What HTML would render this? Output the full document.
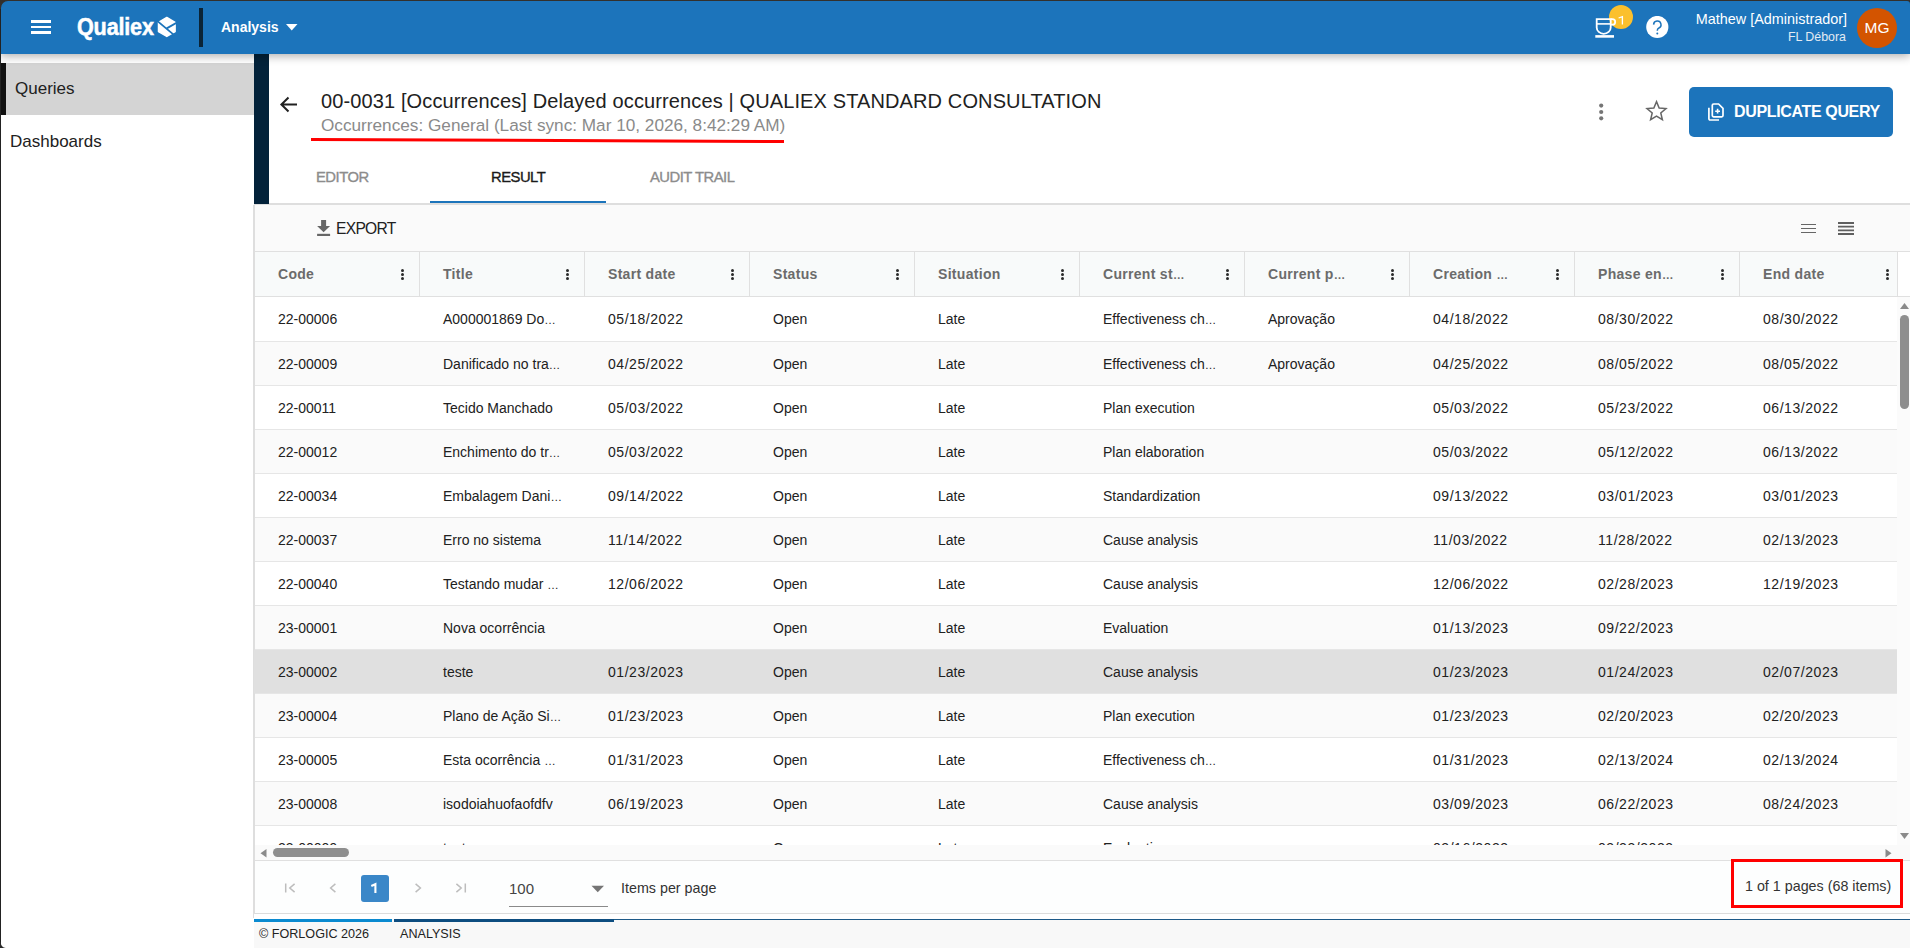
<!DOCTYPE html>
<html><head><meta charset="utf-8"><title>Qualiex Analysis</title>
<style>
*{box-sizing:border-box;margin:0;padding:0}
html,body{width:1910px;height:948px;overflow:hidden;background:#fff;font-family:"Liberation Sans",sans-serif;color:#212121}
.a{position:absolute}
/* frame */
#fr-t{left:0;top:0;width:1910px;height:1px;background:#33302c;z-index:50}
#fr-l{left:0;top:0;width:1px;height:948px;background:#222;z-index:50}
/* header */
#hdr{left:0;top:0;width:1910px;height:54px;background:#1c74bb;z-index:10;box-shadow:0 2px 9px rgba(0,0,0,.33)}
.hb{background:#fff;left:31px;width:20px;height:2px}
#logo{left:77px;top:13px;font-weight:bold;font-size:24px;color:#fff;transform-origin:0 0;transform:scaleX(.9);letter-spacing:-0.2px;-webkit-text-stroke:0.5px #fff;line-height:28px}
#hdiv{left:199px;top:8px;width:4px;height:39px;background:#0b2436}
#anal{left:221px;top:19px;font-weight:bold;font-size:14px;color:#fff;line-height:17px}
#user{right:63px;top:11px;font-size:14.4px;color:#fff;text-align:right;line-height:16px;white-space:nowrap}
#org{right:64px;top:30px;font-size:12.4px;color:#e3ebf3;text-align:right;line-height:14px}
#avatar{left:1857px;top:8px;width:40px;height:40px;border-radius:50%;background:#d35400;color:#fff;font-size:15.5px;padding-bottom:2px;text-align:center;line-height:40px}
#badge{left:1609px;top:5px;width:24px;height:24px;border-radius:50%;background:#fbc02d}
/* sidebar */
#side{left:1px;top:54px;width:253px;height:894px;background:#fff}
#q{left:1px;top:63px;width:253px;height:52px;background:#d4d4d4}
#qbar{left:1px;top:63px;width:5px;height:52px;background:#111}
.snav{font-size:17px;color:#212121;line-height:20px}
/* page head */
#dbar{left:254px;top:54px;width:15px;height:150px;z-index:2;background:#03223a}
#back{left:279px;top:95px}
#title{left:321px;top:90px;font-size:20px;color:#212121;line-height:23px;white-space:nowrap;letter-spacing:.12px}
#sub{left:321px;top:115px;font-size:17.2px;color:#8a8a8a;line-height:20px;white-space:nowrap}
#redline{left:310px;top:136px}
#btn{left:1689px;top:87px;width:204px;height:50px;border-radius:5px;background:#1c74bb}
#btntxt{left:1734px;top:103px;font-weight:bold;font-size:16px;letter-spacing:-0.35px;color:#fff;line-height:17px;white-space:nowrap}
.tab{top:169px;font-size:14.8px;font-weight:normal;-webkit-text-stroke:.35px currentColor;letter-spacing:-0.5px;color:#8c8c8c;line-height:17px;white-space:nowrap}
#tabline{left:430px;top:201px;width:176px;height:2px;background:#1c74bb}
#gline{left:254px;top:203px;width:1656px;height:2px;background:#dedede}
/* content */
#cont{left:253px;top:205px;width:1657px;height:713px;background:#fafafa;border-left:2px solid #dedede}
#export{left:336px;top:220px;font-size:15.6px;letter-spacing:-0.7px;color:#212121;line-height:17px}
/* table */
#thead{left:255px;top:251px;width:1655px;height:46px;border-top:1px solid #e0e0e0;border-bottom:1px solid #e0e0e0;background:#f8fafa;overflow:hidden}
#thead .fill{position:absolute;left:1642px;top:0;width:13px;height:44px;background:#fff;border-left:1px solid #e0e0e0}
.th{position:absolute;top:0;width:165px;height:44px;border-right:1px solid #e0e0e0}
.th span{position:absolute;left:23px;top:14px;font-weight:bold;font-size:14px;letter-spacing:.3px;color:#6b6b6b;line-height:16px;white-space:nowrap}
.el{font-style:normal;font-size:11.5px;letter-spacing:0}
.kb{position:absolute;left:146px;top:17px;width:3px;height:11px}
.kb b{display:block;width:3px;height:3px;border-radius:50%;background:#2a2a2a;margin-bottom:1px}
#tbody{left:254px;top:297px;width:1643px;height:548px;overflow:hidden}
.tr{position:absolute;left:1px;width:1642px;height:44px;border-bottom:1px solid #e6e6e6;background:#fff}
.tr.alt{background:#fafafa}
.tr.hov{background:#e0e0e0}
.tr.hov::before{content:'';position:absolute;left:-1px;top:0;width:1px;height:43px;background:#e0e0e0}
.td.dt{letter-spacing:.55px}
.td{position:absolute;top:0;left:0;width:165px;height:43px;padding-left:23px;font-size:14px;line-height:45px;color:#212121;white-space:nowrap}
#vs{left:1897px;top:297px;width:13px;height:548px;background:#fbfbfb}
#hs{left:255px;top:845px;width:1642px;height:15px;background:#fafafa}
#pager{left:255px;top:860px;width:1655px;height:54px;background:#fdfefe;border-top:1px solid #e0e0e0;border-bottom:1px solid #dcdcdc}
#pg1{left:361px;top:875px;width:28px;height:27px;border-radius:3px;background:#3a87c8}
#sel100{left:509px;top:880px;font-size:15px;color:#444;line-height:17px}
#selline{left:509px;top:906px;width:99px;height:1px;background:#8a8a8a}
#ipp{left:621px;top:880px;font-size:14.3px;color:#333;line-height:17px}
#pinfo{left:1745px;top:878px;font-size:14.3px;color:#333;line-height:17px;white-space:nowrap}
#redbox{left:1731px;top:859px;width:172px;height:49px;border:3px solid #ff0000}
#gap{left:254px;top:914px;width:1656px;height:5px;background:#fff}
#foot{left:254px;top:919px;width:1656px;height:29px;background:#f8f8f8}
#fl1{left:254px;top:919px;width:138px;height:3px;background:#0a8ad0}
#fl2{left:394px;top:919px;width:220px;height:3px;background:#0d4d80}
#fl3{left:614px;top:919px;width:1296px;height:1px;background:#1d5a88}
.ft{top:927px;font-size:12.6px;color:#222;line-height:14px;white-space:nowrap}
</style></head><body>
<div id="fr-t" class="a"></div><div id="fr-l" class="a"></div>
<svg class="a" style="left:0;top:0;z-index:51" width="9" height="9"><path d="M0 0H9V1H8A7 7 0 0 0 1 8V9H0Z" fill="#33302c"/></svg>
<svg class="a" style="left:1904px;top:0;z-index:51" width="6" height="6"><path d="M0 0H6V6H6V4A3 3 0 0 0 3 1H0Z" fill="#33302c"/></svg>
<svg class="a" style="left:0;top:942px;z-index:51" width="7" height="6"><path d="M0 0H1A5 5 0 0 0 6 6H0Z" fill="#2a2a2a"/></svg>

<!-- header -->
<div id="hdr" class="a">
  <div class="a hb" style="top:20px;height:3px"></div>
  <div class="a hb" style="top:26px"></div>
  <div class="a hb" style="top:31px;height:3px"></div>
  <div id="logo" class="a">Qualiex</div>
  <svg class="a" style="left:156px;top:15px" width="22" height="24" viewBox="156 15 22 24">
    <path d="M166.8 17.5L175.1 22.3V31.6L166.8 36.4L158.5 31.6V22.3Z" fill="#fff" stroke="#fff" stroke-width="1.5" stroke-linejoin="round"/>
    <path d="M156.3 20.2L174.2 35.1M166.3 28.6L177.8 22" stroke="#1c74bb" stroke-width="1.8"/>
  </svg>
  <div id="hdiv" class="a"></div>
  <div id="anal" class="a">Analysis</div>
  <svg class="a" style="left:286px;top:24px" width="12" height="7"><path d="M0 0H11.5L5.75 6.5Z" fill="#fff"/></svg>
  <div id="badge" class="a"></div>
  <svg class="a" style="left:1609px;top:5px" width="24" height="24" viewBox="1609 5 24 24"><path d="M1622.4 24.6V16.6L1618.6 18" fill="none" stroke="#fff" stroke-width="1.3"/></svg>
  <!-- cup icon -->
  <svg class="a" style="left:1592px;top:15px" width="26" height="26" viewBox="1592 15 26 26">
    <path d="M1596.7 19.1H1610.7V27.4A7 6.4 0 0 1 1596.7 27.4Z" fill="none" stroke="#fff" stroke-width="1.8"/>
    <path d="M1596.7 23.9H1610.7" stroke="#fff" stroke-width="1.6"/>
    <path d="M1610.7 19.1H1612.4A2.8 2.8 0 0 1 1612.4 24.7H1610.7" fill="none" stroke="#fff" stroke-width="1.8"/>
    <path d="M1595.3 36.4H1614" stroke="#fff" stroke-width="2.6"/>
  </svg>
  <svg class="a" style="left:1646px;top:16px" width="23" height="23" viewBox="0 0 23 23">
    <circle cx="11.3" cy="11" r="11.1" fill="#fff"/>
    <path d="M7.6 8.6A3.7 3.7 0 1 1 12.6 12.2C11.6 12.8 11.3 13.5 11.3 14.8" fill="none" stroke="#1c74bb" stroke-width="1.5"/>
    <circle cx="11.3" cy="17.6" r="1" fill="#1c74bb"/>
  </svg>
  <div id="user" class="a">Mathew [Administrador]</div>
  <div id="org" class="a">FL Débora</div>
  <div id="avatar" class="a">MG</div>
</div>

<!-- sidebar -->
<div id="side" class="a"></div>
<div id="q" class="a"></div><div id="qbar" class="a"></div>
<div class="a snav" style="left:15px;top:79px">Queries</div>
<div class="a snav" style="left:10px;top:132px">Dashboards</div>

<!-- page head -->
<div id="dbar" class="a"></div>
<svg id="back" class="a" width="20" height="19" viewBox="0 0 20 19"><path d="M18 9.5H3M9.5 2.5L2.4 9.5L9.5 16.5" fill="none" stroke="#212121" stroke-width="2"/></svg>
<div id="title" class="a">00-0031 [Occurrences] Delayed occurrences | QUALIEX STANDARD CONSULTATION</div>
<div id="sub" class="a">Occurrences: General (Last sync: Mar 10, 2026, 8:42:29 AM)</div>
<svg id="redline" class="a" width="480" height="9"><path d="M1 3.5L474 5.5" stroke="#ff0000" stroke-width="3"/></svg>
<!-- kebab -->
<svg class="a" style="left:1598px;top:102px" width="7" height="20"><circle cx="3.2" cy="3.6" r="2.1" fill="#757575"/><circle cx="3.2" cy="10" r="2.1" fill="#757575"/><circle cx="3.2" cy="16.3" r="2.1" fill="#757575"/></svg>
<!-- star -->
<svg class="a" style="left:1644px;top:99px" width="25" height="24" viewBox="0 0 25 24">
<path d="M12.50 2.60L15.15 8.96L22.01 9.51L16.78 13.99L18.38 20.69L12.50 17.10L6.62 20.69L8.22 13.99L2.99 9.51L9.85 8.96Z" fill="none" stroke="#666" stroke-width="1.5" stroke-linejoin="miter"/>
</svg>
<div id="btn" class="a"></div>
<svg class="a" style="left:1706px;top:101px" width="20" height="22" viewBox="0 0 20 22">
<path d="M7.6 3H12.6L17 7.4V14.5A1.3 1.3 0 0 1 15.7 15.8H7.6A1.3 1.3 0 0 1 6.3 14.5V4.3A1.3 1.3 0 0 1 7.6 3Z" fill="none" stroke="#fff" stroke-width="1.7"/>
<path d="M2.9 6.8V17.8A1.2 1.2 0 0 0 4.1 19H13" fill="none" stroke="#fff" stroke-width="1.7"/>
<path d="M11.6 7.8V12.6M9.2 10.2H14" stroke="#fff" stroke-width="1.6"/>
</svg>
<div id="btntxt" class="a">DUPLICATE QUERY</div>
<div class="a tab" style="left:316px">EDITOR</div>
<div class="a tab" style="left:491px;color:#1a1a1a">RESULT</div>
<div class="a tab" style="left:650px">AUDIT TRAIL</div>
<div id="tabline" class="a"></div>
<div id="gline" class="a"></div>

<!-- content -->
<div id="cont" class="a"></div>
<svg class="a" style="left:315px;top:218px" width="17" height="19" viewBox="0 0 17 19"><path d="M6.1 1.9H11.1V8.1H15.1L8.6 14.2L2.1 8.1H6.1Z" fill="#666"/><path d="M2.1 16.9H15.1" stroke="#666" stroke-width="2.2"/></svg>
<div id="export" class="a">EXPORT</div>
<svg class="a" style="left:1800px;top:222px" width="18" height="13"><path d="M1 2.5H16M1 6.5H16M1 10.5H16" stroke="#666" stroke-width="1.2"/></svg>
<svg class="a" style="left:1837px;top:220px" width="18" height="17"><path d="M1 3H17M1 6.7H17M1 10.3H17M1 14H17" stroke="#5f5f5f" stroke-width="1.8"/></svg>

<div id="thead" class="a"><div class="th" style="left:0px"><span>Code</span><i class="kb"><b></b><b></b><b></b></i></div><div class="th" style="left:165px"><span>Title</span><i class="kb"><b></b><b></b><b></b></i></div><div class="th" style="left:330px"><span>Start date</span><i class="kb"><b></b><b></b><b></b></i></div><div class="th" style="left:495px"><span>Status</span><i class="kb"><b></b><b></b><b></b></i></div><div class="th" style="left:660px"><span>Situation</span><i class="kb"><b></b><b></b><b></b></i></div><div class="th" style="left:825px"><span>Current st<i class=el>…</i></span><i class="kb"><b></b><b></b><b></b></i></div><div class="th" style="left:990px"><span>Current p<i class=el>…</i></span><i class="kb"><b></b><b></b><b></b></i></div><div class="th" style="left:1155px"><span>Creation <i class=el>…</i></span><i class="kb"><b></b><b></b><b></b></i></div><div class="th" style="left:1320px"><span>Phase en<i class=el>…</i></span><i class="kb"><b></b><b></b><b></b></i></div><div class="th" style="left:1485px"><span>End date</span><i class="kb"><b></b><b></b><b></b></i></div><div class="fill"></div></div>
<div id="tbody" class="a">
<div class="tr" style="top:0;height:45px"><div class="td" style="left:0px">22-00006</div><div class="td" style="left:165px">A000001869 Do<i class=el>…</i></div><div class="td dt" style="left:330px">05/18/2022</div><div class="td" style="left:495px">Open</div><div class="td" style="left:660px">Late</div><div class="td" style="left:825px">Effectiveness ch<i class=el>…</i></div><div class="td" style="left:990px">Aprovação</div><div class="td dt" style="left:1155px">04/18/2022</div><div class="td dt" style="left:1320px">08/30/2022</div><div class="td dt" style="left:1485px">08/30/2022</div></div>
<div class="tr alt" style="top:45px"><div class="td" style="left:0px">22-00009</div><div class="td" style="left:165px">Danificado no tra<i class=el>…</i></div><div class="td dt" style="left:330px">04/25/2022</div><div class="td" style="left:495px">Open</div><div class="td" style="left:660px">Late</div><div class="td" style="left:825px">Effectiveness ch<i class=el>…</i></div><div class="td" style="left:990px">Aprovação</div><div class="td dt" style="left:1155px">04/25/2022</div><div class="td dt" style="left:1320px">08/05/2022</div><div class="td dt" style="left:1485px">08/05/2022</div></div>
<div class="tr" style="top:89px"><div class="td" style="left:0px">22-00011</div><div class="td" style="left:165px">Tecido Manchado</div><div class="td dt" style="left:330px">05/03/2022</div><div class="td" style="left:495px">Open</div><div class="td" style="left:660px">Late</div><div class="td" style="left:825px">Plan execution</div><div class="td" style="left:990px"></div><div class="td dt" style="left:1155px">05/03/2022</div><div class="td dt" style="left:1320px">05/23/2022</div><div class="td dt" style="left:1485px">06/13/2022</div></div>
<div class="tr alt" style="top:133px"><div class="td" style="left:0px">22-00012</div><div class="td" style="left:165px">Enchimento do tr<i class=el>…</i></div><div class="td dt" style="left:330px">05/03/2022</div><div class="td" style="left:495px">Open</div><div class="td" style="left:660px">Late</div><div class="td" style="left:825px">Plan elaboration</div><div class="td" style="left:990px"></div><div class="td dt" style="left:1155px">05/03/2022</div><div class="td dt" style="left:1320px">05/12/2022</div><div class="td dt" style="left:1485px">06/13/2022</div></div>
<div class="tr" style="top:177px"><div class="td" style="left:0px">22-00034</div><div class="td" style="left:165px">Embalagem Dani<i class=el>…</i></div><div class="td dt" style="left:330px">09/14/2022</div><div class="td" style="left:495px">Open</div><div class="td" style="left:660px">Late</div><div class="td" style="left:825px">Standardization</div><div class="td" style="left:990px"></div><div class="td dt" style="left:1155px">09/13/2022</div><div class="td dt" style="left:1320px">03/01/2023</div><div class="td dt" style="left:1485px">03/01/2023</div></div>
<div class="tr alt" style="top:221px"><div class="td" style="left:0px">22-00037</div><div class="td" style="left:165px">Erro no sistema</div><div class="td dt" style="left:330px">11/14/2022</div><div class="td" style="left:495px">Open</div><div class="td" style="left:660px">Late</div><div class="td" style="left:825px">Cause analysis</div><div class="td" style="left:990px"></div><div class="td dt" style="left:1155px">11/03/2022</div><div class="td dt" style="left:1320px">11/28/2022</div><div class="td dt" style="left:1485px">02/13/2023</div></div>
<div class="tr" style="top:265px"><div class="td" style="left:0px">22-00040</div><div class="td" style="left:165px">Testando mudar <i class=el>…</i></div><div class="td dt" style="left:330px">12/06/2022</div><div class="td" style="left:495px">Open</div><div class="td" style="left:660px">Late</div><div class="td" style="left:825px">Cause analysis</div><div class="td" style="left:990px"></div><div class="td dt" style="left:1155px">12/06/2022</div><div class="td dt" style="left:1320px">02/28/2023</div><div class="td dt" style="left:1485px">12/19/2023</div></div>
<div class="tr alt" style="top:309px"><div class="td" style="left:0px">23-00001</div><div class="td" style="left:165px">Nova ocorrência</div><div class="td" style="left:330px"></div><div class="td" style="left:495px">Open</div><div class="td" style="left:660px">Late</div><div class="td" style="left:825px">Evaluation</div><div class="td" style="left:990px"></div><div class="td dt" style="left:1155px">01/13/2023</div><div class="td dt" style="left:1320px">09/22/2023</div><div class="td" style="left:1485px"></div></div>
<div class="tr hov" style="top:353px"><div class="td" style="left:0px">23-00002</div><div class="td" style="left:165px">teste</div><div class="td dt" style="left:330px">01/23/2023</div><div class="td" style="left:495px">Open</div><div class="td" style="left:660px">Late</div><div class="td" style="left:825px">Cause analysis</div><div class="td" style="left:990px"></div><div class="td dt" style="left:1155px">01/23/2023</div><div class="td dt" style="left:1320px">01/24/2023</div><div class="td dt" style="left:1485px">02/07/2023</div></div>
<div class="tr alt" style="top:397px"><div class="td" style="left:0px">23-00004</div><div class="td" style="left:165px">Plano de Ação Si<i class=el>…</i></div><div class="td dt" style="left:330px">01/23/2023</div><div class="td" style="left:495px">Open</div><div class="td" style="left:660px">Late</div><div class="td" style="left:825px">Plan execution</div><div class="td" style="left:990px"></div><div class="td dt" style="left:1155px">01/23/2023</div><div class="td dt" style="left:1320px">02/20/2023</div><div class="td dt" style="left:1485px">02/20/2023</div></div>
<div class="tr" style="top:441px"><div class="td" style="left:0px">23-00005</div><div class="td" style="left:165px">Esta ocorrência <i class=el>…</i></div><div class="td dt" style="left:330px">01/31/2023</div><div class="td" style="left:495px">Open</div><div class="td" style="left:660px">Late</div><div class="td" style="left:825px">Effectiveness ch<i class=el>…</i></div><div class="td" style="left:990px"></div><div class="td dt" style="left:1155px">01/31/2023</div><div class="td dt" style="left:1320px">02/13/2024</div><div class="td dt" style="left:1485px">02/13/2024</div></div>
<div class="tr alt" style="top:485px"><div class="td" style="left:0px">23-00008</div><div class="td" style="left:165px">isodoiahuofaofdfv</div><div class="td dt" style="left:330px">06/19/2023</div><div class="td" style="left:495px">Open</div><div class="td" style="left:660px">Late</div><div class="td" style="left:825px">Cause analysis</div><div class="td" style="left:990px"></div><div class="td dt" style="left:1155px">03/09/2023</div><div class="td dt" style="left:1320px">06/22/2023</div><div class="td dt" style="left:1485px">08/24/2023</div></div>
<div class="tr" style="top:529px"><div class="td" style="left:0px">23-00009</div><div class="td" style="left:165px">teste</div><div class="td" style="left:330px"></div><div class="td" style="left:495px">Open</div><div class="td" style="left:660px">Late</div><div class="td" style="left:825px">Evaluation</div><div class="td" style="left:990px"></div><div class="td dt" style="left:1155px">03/16/2023</div><div class="td dt" style="left:1320px">03/23/2023</div><div class="td" style="left:1485px"></div></div>

</div>
<div id="vs" class="a">
  <svg class="a" style="left:3px;top:6px" width="9" height="7"><path d="M0 6H9L4.5 0Z" fill="#8a8a8a"/></svg>
  <div class="a" style="left:3px;top:18px;width:9px;height:94px;border-radius:4.5px;background:#8e8e8e"></div>
  <svg class="a" style="left:3px;top:536px" width="9" height="7"><path d="M0 0H9L4.5 6Z" fill="#8a8a8a"/></svg>
</div>
<div id="hs" class="a">
  <svg class="a" style="left:5px;top:4px" width="7" height="9"><path d="M6.5 0V8.5L0.5 4.25Z" fill="#8a8a8a"/></svg>
  <div class="a" style="left:18px;top:3px;width:76px;height:9px;border-radius:4.5px;background:#8e8e8e"></div>
  <svg class="a" style="left:1630px;top:4px" width="7" height="9"><path d="M0.5 0V8.5L6.5 4.25Z" fill="#8a8a8a"/></svg>
</div>

<!-- pager -->
<div id="pager" class="a"></div>
<svg class="a" style="left:276px;top:876px" width="200" height="24" viewBox="276 876 200 24">
<g fill="none" stroke="#bdbdbd" stroke-width="1.5">
<path d="M285.7 883.4V892.6M294.6 883.9L289.8 888L294.6 892.1"/>
<path d="M335.4 883.9L330.6 888L335.4 892.1"/>
<path d="M415.6 883.9L420.4 888L415.6 892.1"/>
<path d="M456.4 883.9L461.2 888L456.4 892.1M465.3 883.4V892.6"/>
</g></svg>
<div id="pg1" class="a"></div>
<svg class="a" style="left:361px;top:875px" width="28" height="27" viewBox="361 875 28 27"><path d="M375.4 893V884.2L371.3 886" fill="none" stroke="#fff" stroke-width="2.1"/></svg>
<div id="sel100" class="a">100</div>
<svg class="a" style="left:591px;top:885px" width="14" height="8"><path d="M0.5 0.8H13L6.75 7.2Z" fill="#757575"/></svg>
<div id="selline" class="a"></div>
<div id="ipp" class="a">Items per page</div>
<div id="pinfo" class="a">1 of 1 pages (68 items)</div>
<div id="redbox" class="a"></div>

<!-- footer -->
<div id="gap" class="a"></div>
<div id="foot" class="a"></div>
<div id="fl1" class="a"></div><div id="fl2" class="a"></div><div id="fl3" class="a"></div>
<div class="a ft" style="left:259px">© FORLOGIC 2026</div>
<div class="a ft" style="left:400px">ANALYSIS</div>
</body></html>
